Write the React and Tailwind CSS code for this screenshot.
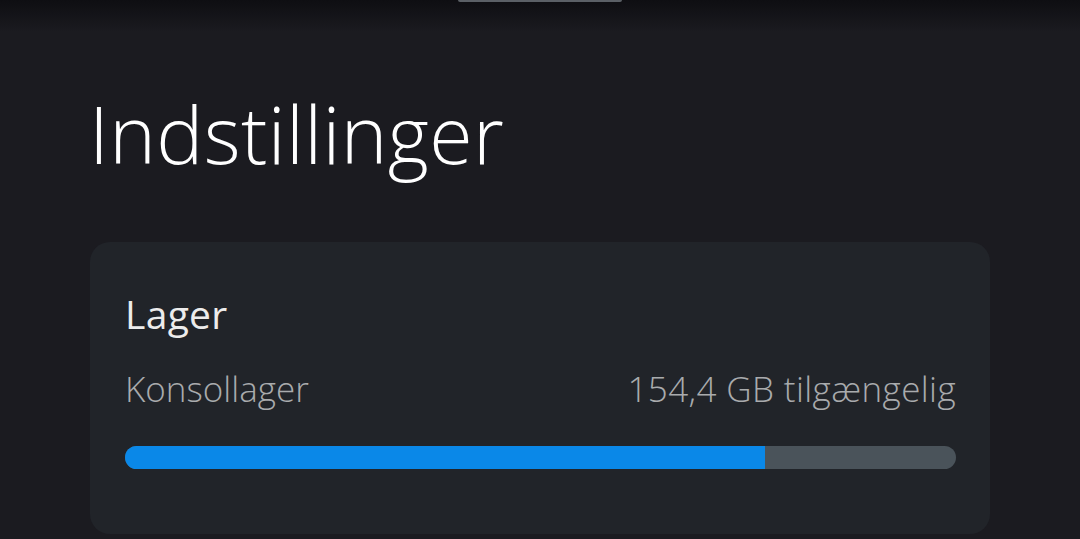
export default function App() {
  return (
    <div className="w-[1080px] h-[539px] bg-[#1b1b20] overflow-hidden flex flex-col" style={{ fontFamily: '"Open Sans", "Noto Sans", sans-serif' }}>
      <div className="h-[32px] shrink-0 bg-gradient-to-b from-[#0e0e12] to-[#1b1b20] flex justify-center">
        <div className="w-[164px] h-[2px] bg-[#5b6066] rounded-b"></div>
      </div>
      <div className="px-[90px] flex flex-col">
        <h1 className="text-[79px] font-light text-white leading-none mt-[62px] ml-[-1px] tracking-[0.4px]">Indstillinger</h1>
        <div className="mt-[69px] bg-[#212429] rounded-[20px] pl-[35px] pr-[34px] pt-[52px] pb-[65px]">
          <div className="text-[39px] font-normal text-[#ececec] leading-none tracking-[0.3px]">Lager</div>
          <div className="flex justify-between mt-[38px] text-[35px] font-light text-[#a9abad] leading-none">
            <span>Konsollager</span>
            <span className="tracking-[0.4px]">154,4 GB tilgængelig</span>
          </div>
          <div className="mt-[40px] h-[23px] rounded-full bg-[#4a535a] overflow-hidden flex">
            <div className="h-full bg-[#0a88e8] w-[77%]"></div>
          </div>
        </div>
      </div>
    </div>
  );
}
